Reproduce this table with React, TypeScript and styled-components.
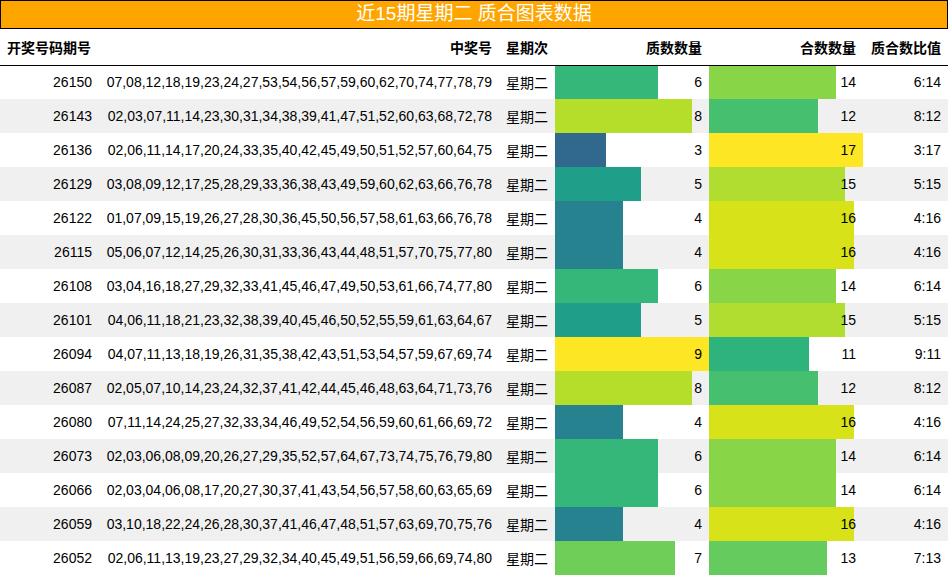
import React from "react";
import styled, { createGlobalStyle } from "styled-components";

const Global = createGlobalStyle`
  html, body { margin: 0; padding: 0; background: #fff; }
  body { font-family: "Liberation Sans", "Noto Sans CJK SC", sans-serif; color: #000; }
`;

type Row = { id: string; nums: string; prime: number; comp: number };

const rows: Row[] = [
  { id: "26150", nums: "07,08,12,18,19,23,24,27,53,54,56,57,59,60,62,70,74,77,78,79", prime: 6, comp: 14 },
  { id: "26143", nums: "02,03,07,11,14,23,30,31,34,38,39,41,47,51,52,60,63,68,72,78", prime: 8, comp: 12 },
  { id: "26136", nums: "02,06,11,14,17,20,24,33,35,40,42,45,49,50,51,52,57,60,64,75", prime: 3, comp: 17 },
  { id: "26129", nums: "03,08,09,12,17,25,28,29,33,36,38,43,49,59,60,62,63,66,76,78", prime: 5, comp: 15 },
  { id: "26122", nums: "01,07,09,15,19,26,27,28,30,36,45,50,56,57,58,61,63,66,76,78", prime: 4, comp: 16 },
  { id: "26115", nums: "05,06,07,12,14,25,26,30,31,33,36,43,44,48,51,57,70,75,77,80", prime: 4, comp: 16 },
  { id: "26108", nums: "03,04,16,18,27,29,32,33,41,45,46,47,49,50,53,61,66,74,77,80", prime: 6, comp: 14 },
  { id: "26101", nums: "04,06,11,18,21,23,32,38,39,40,45,46,50,52,55,59,61,63,64,67", prime: 5, comp: 15 },
  { id: "26094", nums: "04,07,11,13,18,19,26,31,35,38,42,43,51,53,54,57,59,67,69,74", prime: 9, comp: 11 },
  { id: "26087", nums: "02,05,07,10,14,23,24,32,37,41,42,44,45,46,48,63,64,71,73,76", prime: 8, comp: 12 },
  { id: "26080", nums: "07,11,14,24,25,27,32,33,34,46,49,52,54,56,59,60,61,66,69,72", prime: 4, comp: 16 },
  { id: "26073", nums: "02,03,06,08,09,20,26,27,29,35,52,57,64,67,73,74,75,76,79,80", prime: 6, comp: 14 },
  { id: "26066", nums: "02,03,04,06,08,17,20,27,30,37,41,43,54,56,57,58,60,63,65,69", prime: 6, comp: 14 },
  { id: "26059", nums: "03,10,18,22,24,26,28,30,37,41,46,47,48,51,57,63,69,70,75,76", prime: 4, comp: 16 },
  { id: "26052", nums: "02,06,11,13,19,23,27,29,32,34,40,45,49,51,56,59,66,69,74,80", prime: 7, comp: 13 },
];

const primeColors: Record<number, string> = {
  3: "#31688e",
  4: "#26828e",
  5: "#1f9e89",
  6: "#35b779",
  7: "#6ece58",
  8: "#b5de2b",
  9: "#fde725",
};

const compColors: Record<number, string> = {
  11: "#2eb37c",
  12: "#46c06f",
  13: "#65cb5e",
  14: "#89d548",
  15: "#b0dd2f",
  16: "#d8e219",
  17: "#fde725",
};

const Page = styled.div`
  width: 948px;
`;

const Title = styled.div`
  box-sizing: border-box;
  height: 29px;
  border: 1px solid #000;
  background: #ffa500;
  color: #fff;
  font-size: 19px;
  line-height: 26px;
  text-align: center;
`;

const Table = styled.table`
  width: 948px;
  border-collapse: collapse;
  border-spacing: 0;
  table-layout: fixed;
  font-size: 14px;
`;

const HeadCell = styled.th<{ $align?: string }>`
  height: 36px;
  padding: 0 7px;
  font-weight: bold;
  text-align: ${(p) => p.$align || "right"};
  vertical-align: middle;
  border-bottom: 1px solid #000;
  white-space: nowrap;
  box-sizing: border-box;
`;

const BodyRow = styled.tr<{ $striped: boolean }>`
  height: 34px;
  background: ${(p) => (p.$striped ? "#f0f0f0" : "#fff")};
`;

const Cell = styled.td`
  height: 34px;
  padding: 0 7px;
  text-align: right;
  vertical-align: middle;
  white-space: nowrap;
  box-sizing: border-box;
`;

const BarCell = styled(Cell)<{ $pct: number; $color: string }>`
  background: linear-gradient(
    90deg,
    ${(p) => p.$color} ${(p) => p.$pct}%,
    transparent ${(p) => p.$pct}%
  );
`;

export default function App() {
  return (
    <Page>
      <Global />
      <Title>近15期星期二 质合图表数据</Title>
      <Table>
        <colgroup>
          <col style={{ width: 99 }} />
          <col style={{ width: 400 }} />
          <col style={{ width: 56 }} />
          <col style={{ width: 154 }} />
          <col style={{ width: 154 }} />
          <col style={{ width: 85 }} />
        </colgroup>
        <thead>
          <tr>
            <HeadCell $align="left">开奖号码期号</HeadCell>
            <HeadCell>中奖号</HeadCell>
            <HeadCell>星期次</HeadCell>
            <HeadCell>质数数量</HeadCell>
            <HeadCell>合数数量</HeadCell>
            <HeadCell>质合数比值</HeadCell>
          </tr>
        </thead>
        <tbody>
          {rows.map((r, i) => (
            <BodyRow key={r.id} $striped={i % 2 === 1}>
              <Cell>{r.id}</Cell>
              <Cell>{r.nums}</Cell>
              <Cell>星期二</Cell>
              <BarCell $pct={(r.prime / 9) * 100} $color={primeColors[r.prime]}>
                {r.prime}
              </BarCell>
              <BarCell $pct={(r.comp / 17) * 100} $color={compColors[r.comp]}>
                {r.comp}
              </BarCell>
              <Cell>
                {r.prime}:{r.comp}
              </Cell>
            </BodyRow>
          ))}
        </tbody>
      </Table>
    </Page>
  );
}
